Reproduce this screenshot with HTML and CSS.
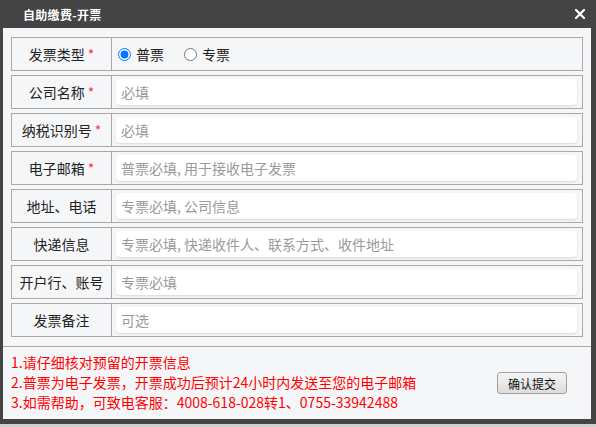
FILE: index.html
```html
<!DOCTYPE html>
<html lang="zh-CN">
<head>
<meta charset="utf-8">
<title>自助缴费-开票</title>
<link rel="stylesheet" href="styles.css">
</head>
<body>
<div class="dialog">
  <div class="titlebar">
    <span class="title">自助缴费-开票</span>
    <span class="close" aria-label="关闭">
      <svg width="10" height="10" viewBox="0 0 10 10"><path d="M1 1 L9 9 M9 1 L1 9" stroke="#fff" stroke-width="2.2" stroke-linecap="square"/></svg>
    </span>
  </div>
  <div class="content">
    <div class="form">
      <div class="row">
        <div class="label">发票类型 <span class="req">*</span></div>
        <div class="value radios">
          <label class="radio"><input type="radio" name="t" checked><span>普票</span></label>
          <label class="radio"><input type="radio" name="t"><span>专票</span></label>
        </div>
      </div>
      <div class="row">
        <div class="label">公司名称 <span class="req">*</span></div>
        <div class="value"><input class="field" type="text" placeholder="必填"></div>
      </div>
      <div class="row">
        <div class="label">纳税识别号 <span class="req">*</span></div>
        <div class="value"><input class="field" type="text" placeholder="必填"></div>
      </div>
      <div class="row">
        <div class="label">电子邮箱 <span class="req">*</span></div>
        <div class="value"><input class="field" type="text" placeholder="普票必填, 用于接收电子发票"></div>
      </div>
      <div class="row">
        <div class="label">地址、电话</div>
        <div class="value"><input class="field" type="text" placeholder="专票必填, 公司信息"></div>
      </div>
      <div class="row">
        <div class="label">快递信息</div>
        <div class="value"><input class="field" type="text" placeholder="专票必填, 快递收件人、联系方式、收件地址"></div>
      </div>
      <div class="row">
        <div class="label">开户行、账号</div>
        <div class="value"><input class="field" type="text" placeholder="专票必填"></div>
      </div>
      <div class="row">
        <div class="label">发票备注</div>
        <div class="value"><input class="field" type="text" placeholder="可选"></div>
      </div>
    </div>
    <div class="footer">
      <div class="notes">
        <p>1.请仔细核对预留的开票信息</p>
        <p>2.普票为电子发票，开票成功后预计24小时内发送至您的电子邮箱</p>
        <p>3.如需帮助，可致电客服：4008-618-028转1、0755-33942488</p>
      </div>
      <button class="submit" type="button">确认提交</button>
    </div>
  </div>
</div>
</body>
</html>
```

FILE: styles.css
```css
html, body {
  margin: 0;
  padding: 0;
}
body {
  background: #cfcfcf;
  font-family: "Noto Sans CJK SC", "Liberation Sans", sans-serif;
  width: 596px;
  height: 427px;
  overflow: hidden;
}
.dialog {
  background: #444444;
  padding: 0 5px 5px 3px;
  width: 588px;
}
.titlebar {
  height: 28px;
  display: flex;
  align-items: center;
  justify-content: space-between;
  padding: 0 6px 0 20px;
  color: #fff;
}
.title {
  font-size: 12px;
  font-weight: bold;
  letter-spacing: 0.3px;
}
.close {
  display: flex;
  width: 10px;
  height: 10px;
}
.content {
  background: #f5f6f8;
}
.form {
  padding: 9px 8px 9px 8px;
  display: flex;
  flex-direction: column;
  gap: 4px;
}
.row {
  display: grid;
  grid-template-columns: 100px 1fr;
  height: 34px;
  box-sizing: border-box;
  border: 1px solid #a9a9a9;
}
.label {
  border-right: 1px solid #a9a9a9;
  display: flex;
  align-items: center;
  justify-content: center;
  font-size: 14px;
  color: #222;
  white-space: pre;
}
.req {
  color: #f0364a;
}
.value {
  display: flex;
  align-items: center;
  padding: 0 5px 0 4px;
}
.field {
  flex: 1;
  height: 26px;
  box-sizing: border-box;
  border: none;
  border-radius: 4px;
  background: #fff;
  box-shadow: 0 1px 2px rgba(0, 0, 0, 0.12);
  padding: 0 5px;
  font-family: inherit;
  font-size: 14px;
  color: #333;
  outline: none;
  margin-top: -1px;
}
.field::placeholder {
  color: #9a9a9a;
}
.radios {
  padding-left: 6px;
  gap: 20px;
}
.radio {
  display: flex;
  align-items: center;
  font-size: 14px;
  color: #222;
}
.radio input {
  margin: 0 5px 0 0;
  width: 13px;
  height: 13px;
}
.footer {
  border-top: 1px solid #a9a9a9;
  display: flex;
  align-items: center;
  justify-content: space-between;
  padding: 5px 24px 7px 8px;
}
.notes p {
  margin: 0;
  font-size: 14px;
  line-height: 20px;
  color: #ff0000;
}
.submit {
  width: 70px;
  height: 22px;
  box-sizing: border-box;
  border: 1px solid #a0a0a0;
  border-radius: 3px;
  background: linear-gradient(#f6f6f6, #dcdcdc);
  font-family: inherit;
  font-size: 12px;
  color: #111;
  padding: 0;
  margin-top: 2px;
}
```
